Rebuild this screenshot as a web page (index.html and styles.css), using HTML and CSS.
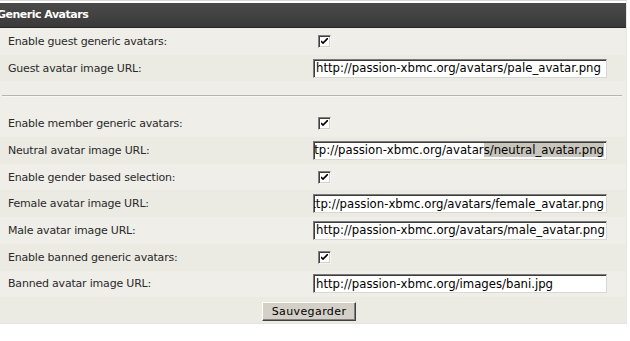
FILE: index.html
```html
<!DOCTYPE html>
<html>
<head>
    <meta charset="utf-8" />
    <title>Generic Avatars</title>
    <link rel="stylesheet" href="styles.css">
</head>
<body>

    <div class="panel">
        <div class="panel-title">Generic Avatars</div>

        <div class="row light">
            <span class="label">Enable guest generic avatars:</span>
            <span class="check"><svg viewBox="0 0 7 7" width="7" height="7"><path d="M0 3 L2 5 L7 0" fill="none" stroke="#000" stroke-width="1.6"/></svg></span>
        </div>
        <div class="row dark">
            <span class="label">Guest avatar image URL:</span>
            <span class="field">http://passion-xbmc.org/avatars/pale_avatar.png</span>
        </div>

        <div class="spacer"><hr></div>

        <div class="row light">
            <span class="label">Enable member generic avatars:</span>
            <span class="check"><svg viewBox="0 0 7 7" width="7" height="7"><path d="M0 3 L2 5 L7 0" fill="none" stroke="#000" stroke-width="1.6"/></svg></span>
        </div>
        <div class="row dark">
            <span class="label">Neutral avatar image URL:</span>
            <span class="field scrolled">http://passion-xbmc.org/avatar<mark>s/neutral_avatar.png</mark></span>
        </div>
        <div class="row light">
            <span class="label">Enable gender based selection:</span>
            <span class="check"><svg viewBox="0 0 7 7" width="7" height="7"><path d="M0 3 L2 5 L7 0" fill="none" stroke="#000" stroke-width="1.6"/></svg></span>
        </div>
        <div class="row dark">
            <span class="label">Female avatar image URL:</span>
            <span class="field scrolled">http://passion-xbmc.org/avatars/female_avatar.png</span>
        </div>
        <div class="row light">
            <span class="label">Male avatar image URL:</span>
            <span class="field">http://passion-xbmc.org/avatars/male_avatar.png</span>
        </div>
        <div class="row dark">
            <span class="label">Enable banned generic avatars:</span>
            <span class="check"><svg viewBox="0 0 7 7" width="7" height="7"><path d="M0 3 L2 5 L7 0" fill="none" stroke="#000" stroke-width="1.6"/></svg></span>
        </div>
        <div class="row light">
            <span class="label">Banned avatar image URL:</span>
            <span class="field">http://passion-xbmc.org/images/bani.jpg</span>
        </div>

        <div class="row dark submit">
            <button class="btn">Sauvegarder</button>
        </div>
    </div>

</body>
</html>
```

FILE: styles.css
```css
html, body {
    margin: 0;
    padding: 0;
    background-color: #ffffff;
    font-family: "DejaVu Sans", Verdana, sans-serif;
    font-size: 11px;
    color: #222222;
}

.panel {
    width: 627px;
    padding-top: 2px;
    border-top: 1px solid #d8d8d8;
    border-bottom: 1px solid #e4e4e4;
    border-right: 1px solid #e6e6e2;
    box-sizing: border-box;
}

.panel-title {
    height: 24px;
    line-height: 23px;
    text-indent: -3px;
    color: #ffffff;
    font-weight: bold;
    font-size: 11px;
    letter-spacing: -0.5px;
    background-color: #404040;
    background-image: linear-gradient(#4a4a4a, #3a3a3a);
    border-bottom: 1px solid #262626;
}

.row {
    display: grid;
    grid-template-columns: 312px 1fr;
    align-items: center;
    height: 26.7px;
    padding-right: 4px;
}

.row.light { background-color: #efeee8; }
.row.dark  { background-color: #ebeae3; }

.label {
    padding-left: 8px;
    letter-spacing: -0.2px;
    color: #2a2a2a;
}

.check {
    display: flex;
    align-items: center;
    justify-content: center;
    width: 11px;
    height: 11px;
    margin-left: 6px;
    background-color: #ffffff;
    border: 1px solid;
    border-color: #808080 #f4f4f4 #f4f4f4 #808080;
    box-shadow: inset 1px 1px 0 #404040, inset -1px -1px 0 #d4d0c8;
}

.field {
    display: flex;
    align-items: center;
    height: 19px;
    width: 294px;
    margin-left: 1px;
    box-sizing: border-box;
    padding: 0 2px;
    overflow: hidden;
    white-space: nowrap;
    color: #000000;
    font-size: 11.7px;
    background-color: #ffffff;
    border: 1px solid;
    border-color: #7a7a7a #d8d8d4 #d8d8d4 #7a7a7a;
    box-shadow: inset 1px 1px 0 #3c3c3c;
}

.field.scrolled {
    justify-content: flex-end;
}

.field mark {
    background-color: #c8c5bd;
    color: #000000;
}

.spacer {
    height: 29px;
    display: flex;
    align-items: center;
    background-color: #efeee8;
    padding-right: 4px;
}

.spacer hr {
    width: 100%;
    margin: 0 0 0 2px;
    border: none;
    border-top: 1px solid #b4b4b0;
    border-bottom: 1px solid #f6f6f2;
}

.row.submit {
    display: flex;
    justify-content: center;
    align-items: flex-start;
    box-sizing: border-box;
    height: 26px;
    padding-top: 5px;
}

.btn {
    width: 94px;
    height: 19px;
    margin-left: -4px;
    padding: 0;
    font-family: "DejaVu Sans", Verdana, sans-serif;
    font-size: 11px;
    letter-spacing: 0.4px;
    color: #000000;
    background-color: #d4d0c8;
    border: 1px solid;
    border-color: #ffffff #404040 #404040 #ffffff;
    box-shadow: inset -1px -1px 0 #808080;
}
```
